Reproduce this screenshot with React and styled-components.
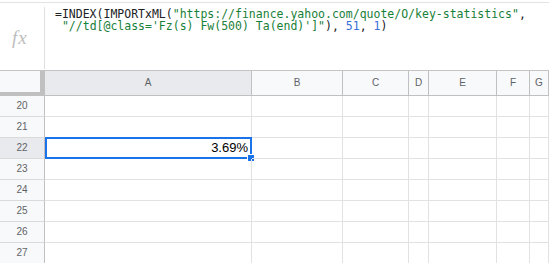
import React from "react";
import styled, { createGlobalStyle, css } from "styled-components";

const Global = createGlobalStyle`
  html, body { margin: 0; padding: 0; background: #fff; overflow: hidden; }
  body { font-family: "Liberation Sans", Arial, sans-serif; }
`;

const COLUMNS = [
  { id: "A", w: "207px" },
  { id: "B", w: "91px" },
  { id: "C", w: "66px" },
  { id: "D", w: "20px" },
  { id: "E", w: "68px" },
  { id: "F", w: "33px" },
  { id: "G", w: "1fr" },
];
const ROWS = [20, 21, 22, 23, 24, 25, 26, 27];
const SELECTED = { row: 22, col: "A", value: "3.69%" };

const Page = styled.div`
  width: 549px;
  height: 263px;
  overflow: hidden;
  display: flex;
  flex-direction: column;
`;

const FormulaBar = styled.div`
  margin-top: 2px;
  height: 67px;
  border-top: 1px solid #e3e3e3;
  border-bottom: 1px solid #c4c4c4;
  display: flex;
  align-items: flex-start;
  flex-shrink: 0;
`;

const FxBox = styled.div`
  width: 44px;
  height: 100%;
  box-sizing: border-box;
  padding: 25px 0 0 12px;
  font-family: "Liberation Serif", "Times New Roman", serif;
  font-style: italic;
  font-size: 19px;
  line-height: 19px;
  letter-spacing: 1px;
  color: #bdbdbd;
`;

const Divider = styled.div`
  width: 1px;
  height: 62px;
  margin-top: 4px;
  background: #e0e0e0;
  flex-shrink: 0;
`;

const FormulaText = styled.div`
  padding: 5px 0 0 10px;
  font-family: "DejaVu Sans Mono", "Liberation Mono", monospace;
  font-size: 11.5px;
  line-height: 12px;
  color: #202124;
  white-space: pre;
`;

const Tok = styled.span`
  color: ${(p) =>
    p.$kind === "str" ? "#188038" : p.$kind === "num" ? "#3b6fd8" : "#202124"};
`;

const Grid = styled.div`
  display: grid;
  grid-template-columns: 45px ${COLUMNS.map((c) => c.w).join(" ")};
  grid-auto-rows: 21px;
  grid-template-rows: 25px;
`;

const headerText = css`
  font-family: "Liberation Sans", Arial, sans-serif;
  font-size: 10px;
  color: #5f6368;
  text-align: center;
`;

const Corner = styled.div`
  box-sizing: border-box;
  background: #f8f9fa;
  border-right: 5px solid #c0c0c0;
  border-bottom: 4px solid #c0c0c0;
`;

const ColHeader = styled.div`
  ${headerText};
  box-sizing: border-box;
  background: ${(p) => (p.$selected ? "#e8eaed" : "#f8f9fa")};
  border-right: 1px solid #c0c0c0;
  border-bottom: 1px solid #c0c0c0;
  line-height: 24px;
  overflow: hidden;
`;

const RowHeader = styled.div`
  ${headerText};
  box-sizing: border-box;
  background: ${(p) => (p.$selected ? "#e8eaed" : "#f8f9fa")};
  border-right: 1px solid #c0c0c0;
  border-bottom: 1px solid #dadada;
  line-height: 20px;
`;

const Cell = styled.div`
  position: relative;
  box-sizing: border-box;
  border-right: 1px solid #e2e2e3;
  border-bottom: 1px solid #e2e2e3;
  padding: 0 3px;
  font-family: "Liberation Sans", Arial, sans-serif;
  font-size: 13px;
  line-height: 20px;
  color: #000;
  text-align: right;
  white-space: nowrap;
`;

const SelectionBox = styled.div`
  position: absolute;
  top: -1px;
  left: 0;
  right: -1px;
  bottom: -1px;
  border: 2px solid #1a73e8;
  pointer-events: none;
`;

const Handle = styled.div`
  position: absolute;
  right: -4px;
  bottom: -4px;
  width: 6px;
  height: 6px;
  background: #1a73e8;
  border: 1px solid #fff;
`;

export default function App() {
  return (
    <Page>
      <Global />
      <FormulaBar>
        <FxBox>fx</FxBox>
        <Divider />
        <FormulaText>
          <div>
            <Tok>=INDEX(IMPORTxML(</Tok>
            <Tok $kind="str">"https://finance.yahoo.com/quote/O/key-statistics"</Tok>
            <Tok>,</Tok>
          </div>
          <div>
            <Tok> </Tok>
            <Tok $kind="str">"//td[@class='Fz(s) Fw(500) Ta(end)']"</Tok>
            <Tok>), </Tok>
            <Tok $kind="num">51</Tok>
            <Tok>, </Tok>
            <Tok $kind="num">1</Tok>
            <Tok>)</Tok>
          </div>
        </FormulaText>
      </FormulaBar>
      <Grid>
        <Corner />
        {COLUMNS.map((c) => (
          <ColHeader key={c.id} $selected={c.id === SELECTED.col}>
            {c.id}
          </ColHeader>
        ))}
        {ROWS.map((r) => (
          <React.Fragment key={r}>
            <RowHeader $selected={r === SELECTED.row}>{r}</RowHeader>
            {COLUMNS.map((c) => {
              const sel = r === SELECTED.row && c.id === SELECTED.col;
              return (
                <Cell key={c.id}>
                  {sel && SELECTED.value}
                  {sel && <SelectionBox />}
                  {sel && <Handle />}
                </Cell>
              );
            })}
          </React.Fragment>
        ))}
      </Grid>
    </Page>
  );
}
